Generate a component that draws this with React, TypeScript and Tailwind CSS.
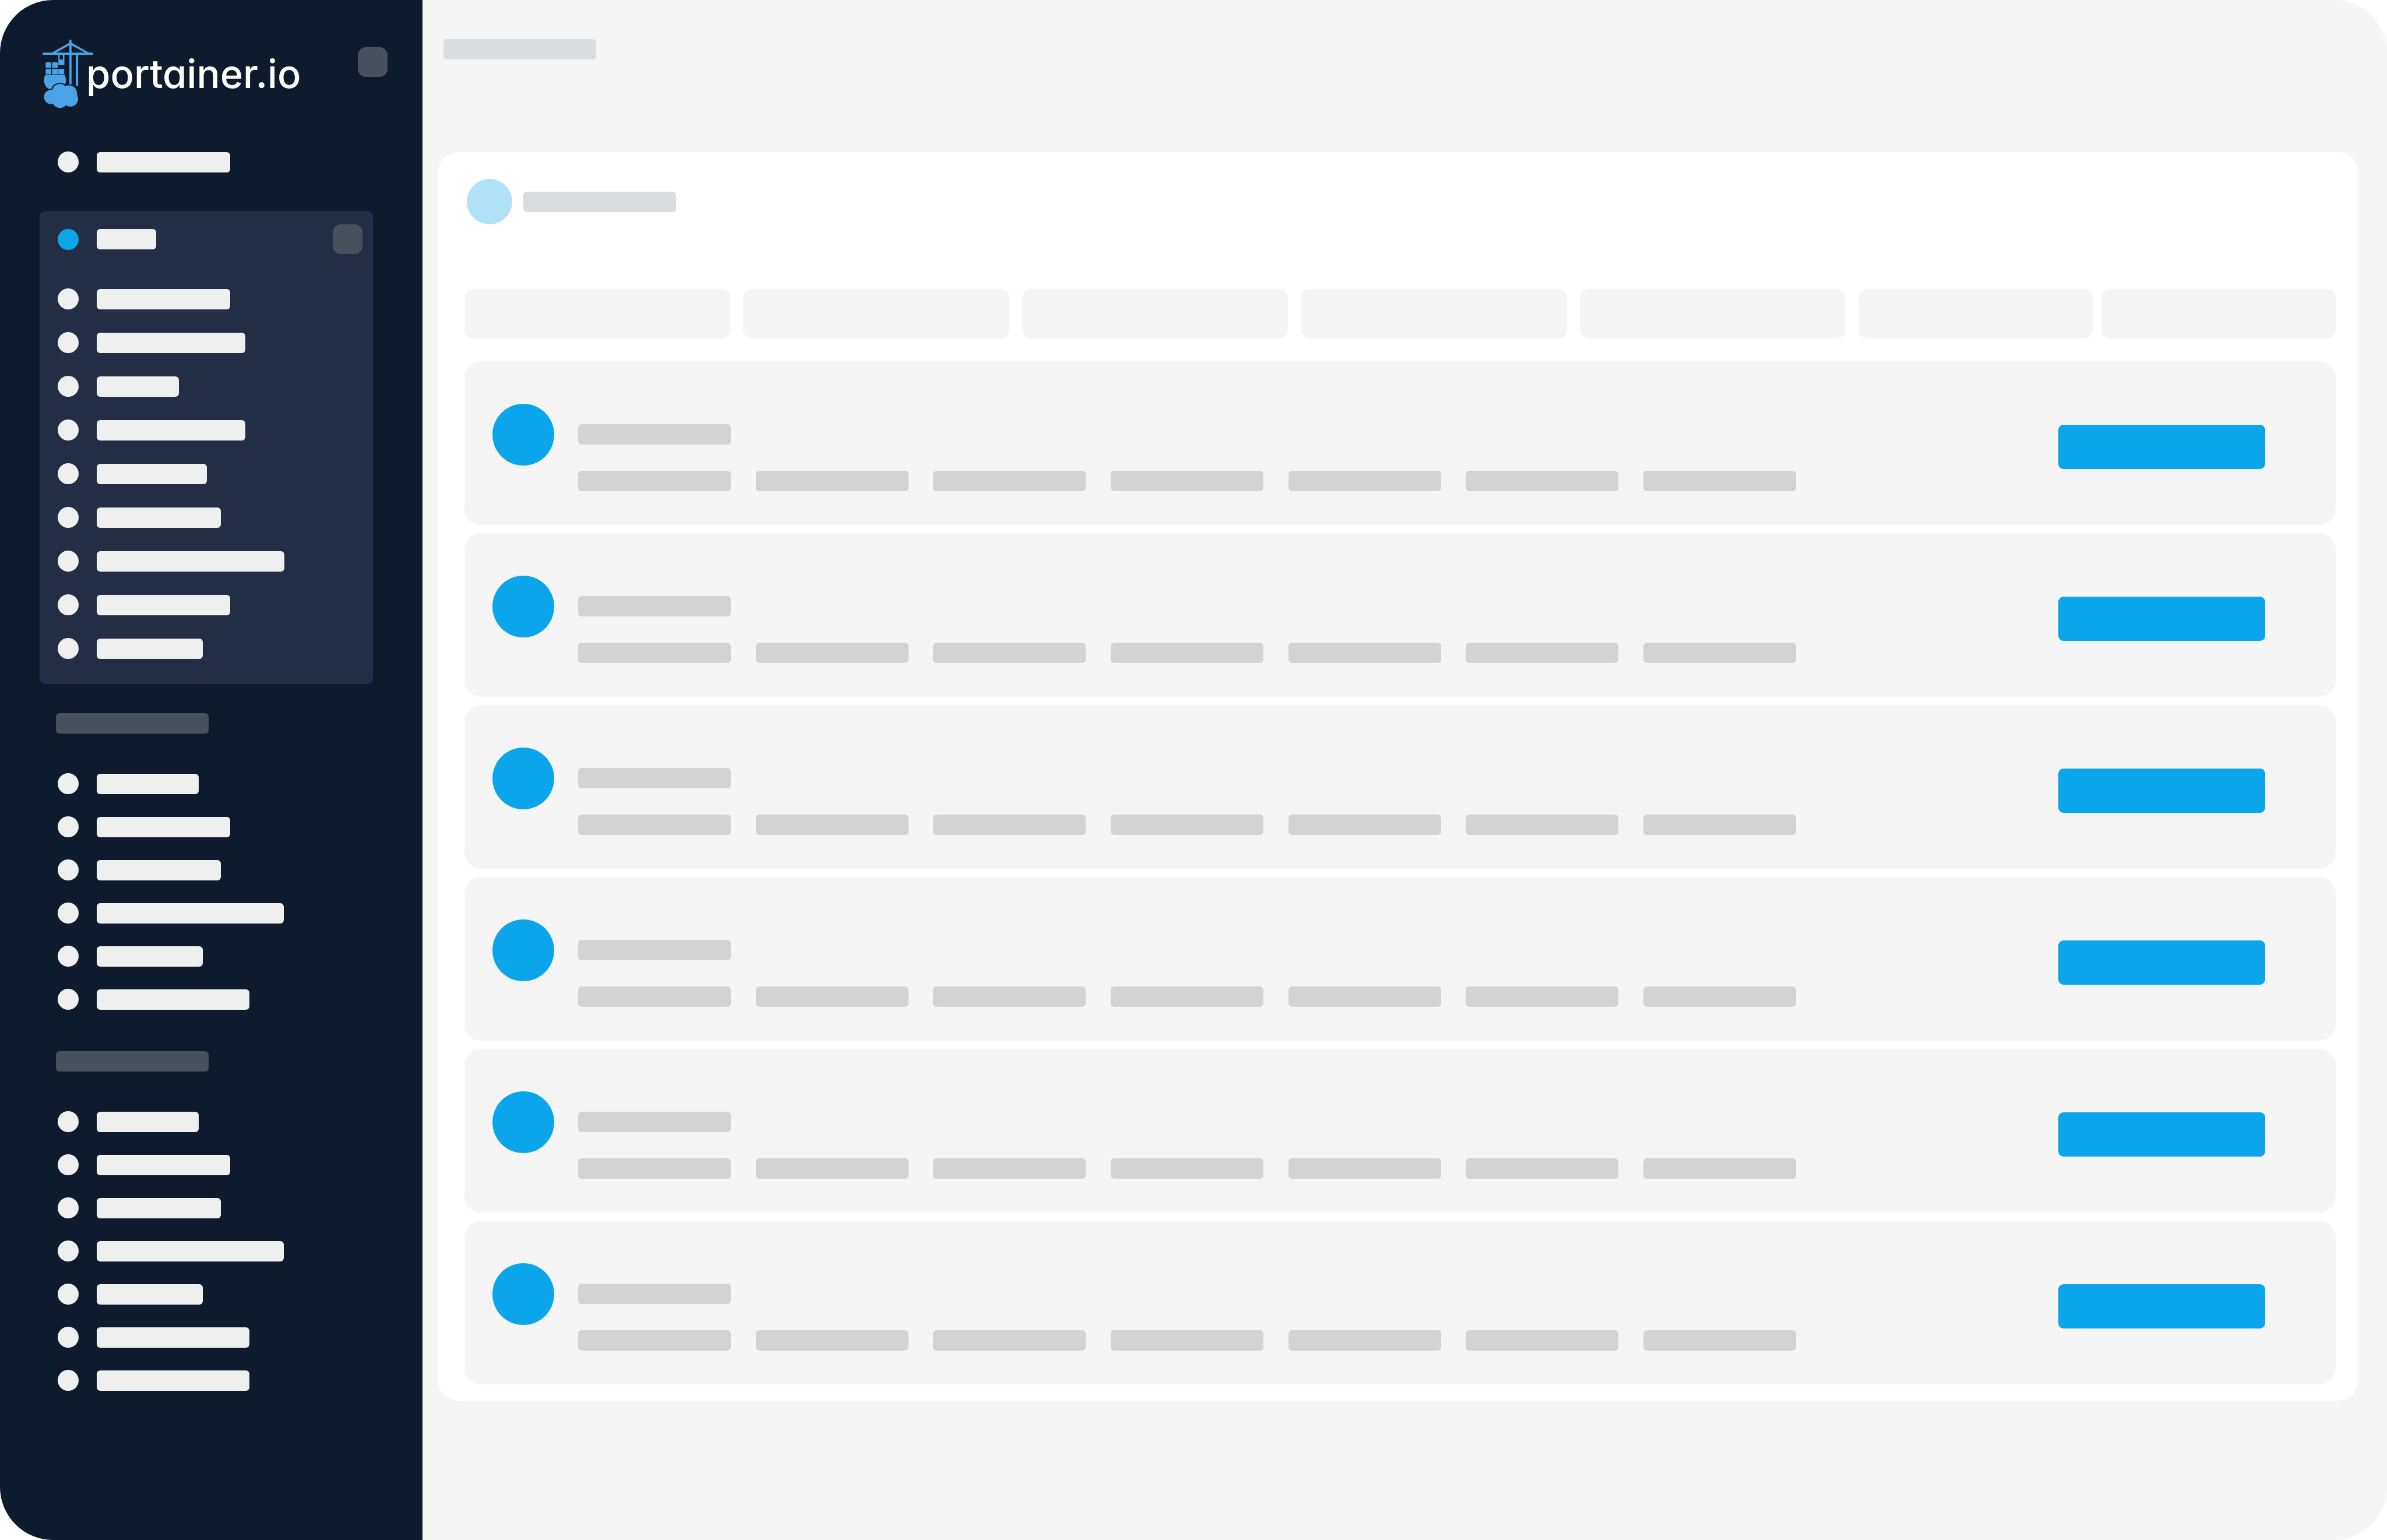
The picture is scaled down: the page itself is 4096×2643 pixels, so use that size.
type BarItem = { width: number; active?: boolean };

const bars = (widths: number[]): BarItem[] => widths.map((width) => ({ width }));

const environmentItems = bars([229, 255, 141, 255, 189, 213, 322, 229, 182]);
const adminItems = bars([175, 229, 213, 321, 182, 262]);
const settingsItems = bars([175, 229, 213, 321, 182, 262, 262]);

function NavLink({ width, active = false }: BarItem) {
  return (
    <a href="#" className="flex items-center gap-[31px]">
      <span className={active ? "size-9 rounded-full bg-[#0ba5ec]" : "size-9 rounded-full bg-[#efefef]"} />
      <span className="h-[35px] rounded-md bg-[#efefef]" style={{ width }} />
    </a>
  );
}

function NavSection({ items }: { items: BarItem[] }) {
  return (
    <section>
      <div className="ml-[28px] h-[35px] w-[262px] rounded-md bg-[#48505e]" />
      <nav className="mt-[68px] ml-[31px] flex flex-col gap-[38px]">
        {items.map((item, i) => (
          <NavLink key={i} {...item} />
        ))}
      </nav>
    </section>
  );
}

function Logo() {
  return (
    <a href="#" className="flex items-center">
      <svg viewBox="52 66 276 373" className="h-[118px] w-[87px] shrink-0" fill="#4ba2e6" aria-hidden="true">
        <rect x="198" y="66" width="12" height="243" />
        <rect x="53" y="136" width="274" height="12" />
        <path d="M204 79 L309 139 H289 L204 93 L119 139 H97 Z" />
        <path d="M233 142 H246 V321 L233 313 Z" />
        <path fillRule="evenodd" d="M138 146 H171 V204 H138 Z M145 149 V174 H163 V149 Z" />
        <path d="M69 189h30v30h-30z M104 189h31v30h-31z M69 225h30v30h-30z M104 225h31v30h-31z M138 225h32v30h-32z" />
        <path d="M66 259 H173 C180 275 182 291 175 308 C151 293 108 302 101 332 L86 334 C60 318 54 284 66 259 Z" />
        <path d="M106 338 C112 303 160 297 176 319 C204 306 242 322 240 365 C255 394 238 430 206 430 C195 430 186 427 179 422 C163 443 125 443 110 417 C80 421 60 401 60 377 C60 353 80 337 106 338 Z" />
      </svg>
      <span className="-ml-3 font-['Inter','Open_Sans',sans-serif] text-[67px] leading-[80px] font-medium whitespace-nowrap text-white [font-feature-settings:'cv11','ss03']">
        portainer.io
      </span>
    </a>
  );
}

function Sidebar() {
  return (
    <aside className="w-[725px] shrink-0 bg-[#0d1b2d] pr-[60px] pl-[68px]">
      <header className="flex items-start justify-between pt-[68px] pl-[5px]">
        <Logo />
        <button type="button" aria-label="Collapse sidebar" className="mt-[13px] size-[51px] rounded-[14px] bg-[#48505e]" />
      </header>
      <nav className="mt-[74px] ml-[31px]">
        <NavLink width={229} />
      </nav>
      <section className="mt-[66px] mr-[25px] rounded-[10px] bg-[#232e45] pt-[23px] pr-[18px] pb-[43px] pl-[31px]">
        <div className="flex items-center justify-between">
          <NavLink width={102} active />
          <button type="button" aria-label="Close environment" className="size-[51px] rounded-[14px] bg-[#48505e]" />
        </div>
        <nav className="mt-[59px] flex flex-col gap-[39px]">
          {environmentItems.map((item, i) => (
            <NavLink key={i} {...item} />
          ))}
        </nav>
      </section>
      <div className="mt-[50px] flex flex-col gap-[71px]">
        <NavSection items={adminItems} />
        <NavSection items={settingsItems} />
      </div>
    </aside>
  );
}

function Filters() {
  return (
    <div className="mt-[111px] grid grid-cols-[repeat(5,456fr)_818fr] gap-[22px]">
      {[0, 1, 2, 3, 4].map((i) => (
        <button key={i} type="button" aria-label="Filter" className="h-[85px] rounded-[15px] bg-[#f5f5f5]" />
      ))}
      <div className="grid grid-cols-2 gap-[15px]">
        <button type="button" aria-label="Clear filters" className="h-[85px] rounded-[15px] bg-[#f5f5f5]" />
        <button type="button" aria-label="Sort" className="h-[85px] rounded-[15px] bg-[#f5f5f5]" />
      </div>
    </div>
  );
}

function EnvironmentRow() {
  return (
    <li className="flex items-start rounded-[28px] bg-[#f5f5f5] pr-[121px] pb-[58px] pl-[48px]">
      <span className="mt-[73px] size-[106px] shrink-0 rounded-full bg-[#0ba5ec]" />
      <div className="mt-[108px] ml-[41px] flex w-[2090px] flex-col gap-[45px]">
        <div className="h-[35px] w-[262px] rounded-md bg-[#d3d3d3]" />
        <div className="flex justify-between">
          {[0, 1, 2, 3, 4, 5, 6].map((i) => (
            <div key={i} className="h-[35px] w-[262px] rounded-md bg-[#d3d3d3]" />
          ))}
        </div>
      </div>
      <button type="button" aria-label="Connect" className="mt-[109px] ml-auto h-[76px] w-[355px] rounded-[9px] bg-[#0ba5ec]" />
    </li>
  );
}

export default function App() {
  return (
    <div className="min-h-screen bg-white">
      <div className="flex min-h-screen overflow-hidden rounded-[91px] bg-[#f5f5f5]">
        <Sidebar />
        <main className="min-w-0 flex-1 pt-[67px] pr-[49px] pl-[26px]">
          <div className="ml-[10px] h-[35px] w-[262px] rounded-md bg-[#dbdcde]" />
          <section className="mt-[159px] rounded-[36px] bg-white pt-[46px] pr-[39px] pb-[28px] pl-[46px]">
            <header className="ml-[4px] flex items-center gap-[19px]">
              <span className="size-[78px] rounded-full bg-[#b2e2fa]" />
              <span className="h-[35px] w-[262px] rounded-md bg-[#dbdcde]" />
            </header>
            <Filters />
            <ul className="mt-[39px] flex flex-col gap-[14px]">
              {[0, 1, 2, 3, 4, 5].map((i) => (
                <EnvironmentRow key={i} />
              ))}
            </ul>
          </section>
        </main>
      </div>
    </div>
  );
}
